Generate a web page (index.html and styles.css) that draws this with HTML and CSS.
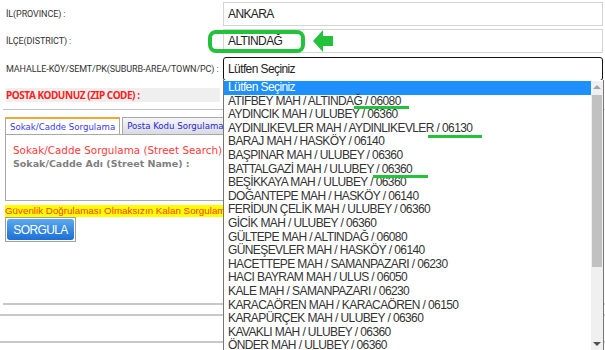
FILE: index.html
```html
<!DOCTYPE html>
<html lang="tr">
<head>
    <meta charset="UTF-8">
    <meta name="viewport" content="width=device-width, initial-scale=1.0">
    <title>Posta Kodu Sorgulama</title>
    <link rel="stylesheet" href="styles.css">
</head>
<body>
    <div class="page">
        <div class="fields">
            <div class="field">
                <label>İL(PROVINCE) :</label>
                <div class="box">ANKARA</div>
            </div>
            <div class="field">
                <label>İLÇE(DISTRICT) :</label>
                <div class="box">ALTINDAĞ</div>
            </div>
            <div class="field">
                <label>MAHALLE-KÖY/SEMT/PK(SUBURB-AREA/TOWN/PC) :</label>
                <div class="box select">Lütfen Seçiniz</div>
            </div>
            <div class="field zip-row">
                <label class="zip">POSTA KODUNUZ (ZIP CODE) :</label>
                <div></div>
            </div>
        </div>

        <div class="rule"></div>

        <div class="tabs">
            <div class="tab active">Sokak/Cadde Sorgulama</div>
            <div class="tab">Posta Kodu Sorgulama</div>
        </div>
        <div class="panel">
            <div class="panel-title">Sokak/Cadde Sorgulama (Street Search)</div>
            <div class="panel-label">Sokak/Cadde Adı (Street Name) :</div>
        </div>
        <div class="warning">Güvenlik Doğrulaması Olmaksızın Kalan Sorgulama Hakkınız : 10</div>
        <div class="btn-wrap"><button class="btn">SORGULA</button></div>

        <div class="rule rule-a"></div>
        <div class="rule rule-b"></div>
        <div class="rule rule-c"></div>
    </div>

    <!-- annotation over the district field -->
    <div class="mark-box"></div>
    <svg class="mark-arrow" width="20" height="22" viewBox="0 0 20 22">
        <polygon points="0,11 10,0 10,6 20,6 20,16 10,16 10,22" fill="#22c33b"/>
    </svg>

    <div class="dropdown">
        <ul class="options">
            <li class="selected">Lütfen Seçiniz</li>
            <li>ATIFBEY MAH / ALTINDAĞ / 06080</li>
            <li>AYDINCIK MAH / ULUBEY / 06360</li>
            <li>AYDINLIKEVLER MAH / AYDINLIKEVLER / 06130</li>
            <li>BARAJ MAH / HASKÖY / 06140</li>
            <li>BAŞPINAR MAH / ULUBEY / 06360</li>
            <li>BATTALGAZİ MAH / ULUBEY / 06360</li>
            <li>BEŞİKKAYA MAH / ULUBEY / 06360</li>
            <li>DOĞANTEPE MAH / HASKÖY / 06140</li>
            <li>FERİDUN ÇELİK MAH / ULUBEY / 06360</li>
            <li>GİCİK MAH / ULUBEY / 06360</li>
            <li>GÜLTEPE MAH / ALTINDAĞ / 06080</li>
            <li>GÜNEŞEVLER MAH / HASKÖY / 06140</li>
            <li>HACETTEPE MAH / SAMANPAZARI / 06230</li>
            <li>HACI BAYRAM MAH / ULUS / 06050</li>
            <li>KALE MAH / SAMANPAZARI / 06230</li>
            <li>KARACAÖREN MAH / KARACAÖREN / 06150</li>
            <li>KARAPÜRÇEK MAH / ULUBEY / 06360</li>
            <li>KAVAKLI MAH / ULUBEY / 06360</li>
            <li>ÖNDER MAH / ULUBEY / 06360</li>
        </ul>
        <div class="scrollbar">
            <span class="arrow up"></span>
            <span class="thumb"></span>
            <span class="arrow down"></span>
        </div>
        <span class="underline u1"></span>
        <span class="underline u2"></span>
        <span class="underline u3"></span>
    </div>
</body>
</html>
```

FILE: styles.css
```css
body {
    margin: 0;
    font-family: Roboto, sans-serif;
    font-size: 9px;
    letter-spacing: -0.1px;
    color: #333;
    background-color: #ffffff;
    width: 605px;
    height: 350px;
    overflow: hidden;
    position: relative;
}
.page {
    padding-top: 2px;
}
.fields {
    display: flex;
    flex-direction: column;
    gap: 3px;
}
.field {
    display: grid;
    grid-template-columns: 223px 380px;
    align-items: center;
}
.field label {
    padding-left: 6px;
    white-space: nowrap;
}
.box {
    height: 24px;
    box-sizing: border-box;
    border: 1px solid #d4d4d4;
    padding-left: 4px;
    display: flex;
    align-items: center;
    font-family: 'Liberation Sans', Arial, sans-serif;
    font-size: 12px;
    letter-spacing: -0.6px;
    color: #222;
}
.select {
    margin-top: 1px;
    border: 1px solid #111;
    border-radius: 3px;
}
.zip-row {
    margin-top: 4px;
}
.zip {
    background-color: #efefef;
    margin-left: 6px;
    padding-left: 0 !important;
    width: 214px;
    height: 14px;
    line-height: 14px;
    font-family: 'Noto Sans', sans-serif;
    font-size: 10px;
    letter-spacing: -0.45px;
    color: #ff2020;
    font-weight: bold;
}
.rule {
    border-top: 1px solid #c4c4c4;
    margin-left: 3px;
    margin-top: 7px;
}
.tabs {
    display: flex;
    gap: 2px;
    margin: 7px 0 0 5px;
}
.tab {
    height: 16px;
    line-height: 16px;
    padding: 0 4px;
    border: 1px solid #a9a9a9;
    border-bottom: none;
    font-family: 'DejaVu Sans', Verdana, sans-serif;
    font-size: 8.6px;
    letter-spacing: 0;
    white-space: nowrap;
    color: #2a2ad0;
    background: linear-gradient(#f6f6fa, #dadae2);
    width: 150px;
}
.tab.active {
    width: auto;
    background: #ffffff;
    border-top: 2px solid #f0a830;
    height: 15px;
    color: #3a3ae8;
}
.panel {
    margin-left: 5px;
    width: 400px;
    height: 67px;
    border: 1px solid #a9a9a9;
    padding: 8px 0 0 7px;
    box-sizing: border-box;
    font-family: 'DejaVu Sans', Verdana, sans-serif;
    font-size: 10.4px;
    letter-spacing: 0;
    line-height: 14px;
}
.panel-title {
    color: #ff3b3b;
}
.panel-label {
    color: #808080;
    font-weight: bold;
    font-size: 9.5px;
}
.warning {
    margin: 4px 0 0 5px;
    width: 400px;
    height: 12px;
    line-height: 12px;
    background-color: #ffff00;
    color: #ff3a00;
    font-family: 'Liberation Sans', Tahoma, sans-serif;
    font-size: 9.8px;
    letter-spacing: 0;
    white-space: nowrap;
    overflow: hidden;
}
.btn-wrap {
    margin-left: 5px;
    width: 71px;
    height: 25px;
    box-sizing: border-box;
    border: 1px solid #a0a0a0;
    padding: 1px;
}
.btn {
    width: 100%;
    height: 100%;
    border: none;
    border-radius: 3px;
    background: linear-gradient(#5aa9ee, #1c6fd6);
    color: #ffffff;
    font-family: 'Liberation Sans', Arial, sans-serif;
    font-size: 12px;
    letter-spacing: -0.6px;
    padding: 0;
}
.rule-a {
    margin-top: 61px;
    border-top: 2px solid #c8c8c8;
}
.rule-b {
    margin: 9px 0 0 0;
    border-top: 2px solid #c8c8c8;
}
.rule-c {
    margin: 25px 0 0 0;
    border-top: 2px solid #c8c8c8;
}
.mark-box {
    position: absolute;
    left: 208px;
    top: 30px;
    width: 97px;
    height: 23px;
    box-sizing: border-box;
    border: 4px solid #22c33b;
    border-radius: 8px;
}
.mark-arrow {
    position: absolute;
    left: 313px;
    top: 30px;
}
.dropdown {
    position: absolute;
    left: 223px;
    top: 80px;
    width: 381px;
    height: 280px;
    box-sizing: border-box;
    border: 1px solid #767676;
    border-top: none;
    background-color: #ffffff;
    display: flex;
}
.options {
    list-style: none;
    margin: 0;
    padding: 1px 0 0 0;
    flex: 1;
    font-family: 'Liberation Sans', Arial, sans-serif;
    font-size: 12px;
    letter-spacing: -0.6px;
    color: #333;
}
.options li {
    height: 13.6px;
    line-height: 13.6px;
    padding-left: 4px;
    white-space: nowrap;
}
.options li.selected {
    background-color: #1e90ff;
    color: #ffffff;
}
.scrollbar {
    width: 12px;
    background-color: #f0f0f0;
    display: flex;
    flex-direction: column;
    align-items: center;
    padding-top: 4px;
    margin-top: 1px;
}
.arrow {
    width: 0;
    height: 0;
    border-left: 4px solid transparent;
    border-right: 4px solid transparent;
}
.arrow.up {
    border-bottom: 4px solid #a3a3a3;
}
.arrow.down {
    border-top: 4px solid #505050;
    margin-top: 75px;
}
.thumb {
    width: 10px;
    height: 172px;
    margin-top: 6px;
    background-color: #c1c1c1;
}
.underline {
    position: absolute;
    height: 3px;
    background-color: #22c33b;
}
.u1 {
    left: 130px;
    top: 26px;
    width: 55px;
}
.u2 {
    left: 204px;
    top: 55px;
    width: 54px;
}
.u3 {
    left: 149px;
    top: 95px;
    width: 55px;
}
```
